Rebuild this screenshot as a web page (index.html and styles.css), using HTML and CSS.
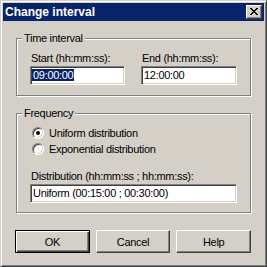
FILE: index.html
```html
<!DOCTYPE html>
<html lang="en">
<head>
  <meta charset="UTF-8">
  <title>Change interval</title>
  <link rel="stylesheet" href="styles.css">
</head>
<body>

<div class="window">
  <!-- Title bar -->
  <div class="titlebar">
    <span class="title">Change interval</span>
    <div class="close-btn">
      <svg width="8" height="7" viewBox="0 0 8 7" shape-rendering="crispEdges">
        <path d="M0 0h2v1h-2zM6 0h2v1h-2zM1 1h2v1h-2zM5 1h2v1h-2zM2 2h4v1h-4zM3 3h2v1h-2zM2 4h4v1h-4zM1 5h2v1h-2zM5 5h2v1h-2zM0 6h2v1h-2zM6 6h2v1h-2z" fill="#000"/>
      </svg>
    </div>
  </div>

  <div class="content">
    <fieldset class="group group-time">
      <legend>Time interval</legend>
      <div class="time-row">
        <div class="field">
          <label>Start (hh:mm:ss):</label>
          <div class="edit"><span class="sel">09:00:00</span></div>
        </div>
        <div class="field">
          <label>End (hh:mm:ss):</label>
          <div class="edit">12:00:00</div>
        </div>
      </div>
    </fieldset>

    <fieldset class="group group-freq">
      <legend>Frequency</legend>
      <div class="radio-list">
        <div class="radio-row"><span class="radio checked"></span>Uniform distribution</div>
        <div class="radio-row"><span class="radio"></span>Exponential distribution</div>
      </div>
      <div class="field">
        <label>Distribution (hh:mm:ss ; hh:mm:ss):</label>
        <div class="edit edit-wide">Uniform (00:15:00 ; 00:30:00)</div>
      </div>
    </fieldset>

    <div class="buttons">
      <div class="btn default"><span>OK</span></div>
      <div class="btn"><span>Cancel</span></div>
      <div class="btn"><span>Help</span></div>
    </div>
  </div>
</div>

</body>
</html>
```

FILE: styles.css
```css
/* Classic Windows 2000 dialog */
body {
  margin: 0;
  font-family: "Liberation Sans", Arial, sans-serif;
  font-size: 11px;
  letter-spacing: -0.3px;
  color: #000;
}

.window {
  width: 267px;
  height: 267px;
  box-sizing: border-box;
  background-color: #d4d0c8;
  border: 1px solid;
  border-color: #d4d0c8 #404040 #404040 #d4d0c8;
  box-shadow: inset 1px 1px #fff, inset -1px -1px #808080;
  padding: 2px;
}

.titlebar {
  height: 18px;
  background-color: #0a246a;
  display: flex;
  align-items: center;
  justify-content: space-between;
  padding-left: 2px;
}

.title {
  color: #fff;
  font-weight: bold;
  font-size: 12px;
  letter-spacing: 0;
}

.close-btn {
  width: 16px;
  height: 14px;
  box-sizing: border-box;
  margin-right: 2px;
  background-color: #d4d0c8;
  border: 1px solid;
  border-color: #fff #404040 #404040 #fff;
  box-shadow: inset -1px -1px #808080;
  display: flex;
  align-items: center;
  justify-content: center;
  padding: 0 1px 1px 0;
}

.close-btn svg {
  display: block;
}

.content {
  padding: 11px 13px 0 13px;
}

.group {
  margin: 0;
  padding: 0 0 0 13px;
  border: 1px solid #808080;
  box-shadow: inset 1px 1px #fff, 1px 1px #fff;
  min-width: 0;
}

.group legend {
  margin-left: -8px;
  padding: 0 2px;
  line-height: 13px;
  background-color: #d4d0c8;
}

.group-time {
  height: 55px;
  padding-top: 7px;
}

.group-freq {
  margin-top: 11px;
  height: 99px;
  padding-top: 5px;
}

.time-row {
  display: grid;
  grid-template-columns: 95px 96px;
  column-gap: 16px;
}

.field label {
  display: block;
  padding-left: 1px;
  line-height: 13px;
  margin-bottom: 1px;
}

.edit {
  height: 19px;
  box-sizing: border-box;
  background-color: #fff;
  border: 1px solid;
  border-color: #808080 #fff #fff #808080;
  box-shadow: inset 1px 1px #404040, inset -1px -1px #d4d0c8;
  padding: 2px 0 0 2px;
  line-height: 13px;
  white-space: nowrap;
  overflow: hidden;
}

.edit-wide {
  width: 207px;
}

.sel {
  background-color: #0a246a;
  color: #fff;
  margin-left: -1px;
  padding: 0 1px;
}

.radio-list {
  display: flex;
  flex-direction: column;
  margin-bottom: 13px;
}

.radio-row {
  display: flex;
  align-items: center;
  height: 16px;
  padding-left: 2px;
}

.radio {
  width: 12px;
  height: 12px;
  box-sizing: border-box;
  border-radius: 50%;
  border: 1px solid;
  border-color: #808080 #fff #fff #808080;
  box-shadow: inset 1px 1px #404040, inset -1px -1px #d4d0c8;
  background-color: #fff;
  margin-right: 5px;
  position: relative;
}

.radio.checked::after {
  content: "";
  position: absolute;
  left: 3px;
  top: 3px;
  width: 4px;
  height: 4px;
  border-radius: 50%;
  background-color: #000;
}

.buttons {
  display: flex;
  margin-top: 17px;
  margin-left: -1px;
  gap: 6px;
}

.btn {
  width: 75px;
  height: 23px;
  box-sizing: border-box;
  border: 1px solid;
  border-color: #fff #404040 #404040 #fff;
  box-shadow: inset -1px -1px #808080;
  display: flex;
  align-items: center;
  justify-content: center;
}

.btn.default {
  border: 1px solid #000;
  box-shadow: inset 1px 1px #fff, inset -1px -1px #404040, inset -2px -2px #808080;
}
```
